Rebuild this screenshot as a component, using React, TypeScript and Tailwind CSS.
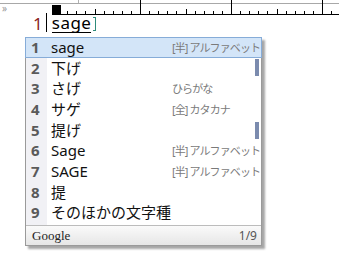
import React from "react";

const rows: { n: number; t: string; a?: string }[] = [
  { n: 1, t: "sage", a: "[半] アルファベット" },
  { n: 2, t: "下げ" },
  { n: 3, t: "さげ", a: "ひらがな" },
  { n: 4, t: "サゲ", a: "[全] カタカナ" },
  { n: 5, t: "提げ" },
  { n: 6, t: "Sage", a: "[半] アルファベット" },
  { n: 7, t: "SAGE", a: "[半] アルファベット" },
  { n: 8, t: "提" },
  { n: 9, t: "そのほかの文字種" },
];

const font = { fontFamily: '"Noto Sans", "Noto Sans CJK JP", sans-serif' };

function Ruler() {
  const ticks: React.ReactElement[] = [];
  for (let i = 1; i < 34; i++) {
    const x = 49 + i * 9.1;
    const major = i % 10 === 0;
    const mid = i % 5 === 0 && !major;
    const y1 = major ? 0 : mid ? 9 : 11;
    ticks.push(
      <line key={i} x1={Math.round(x) + 0.5} x2={Math.round(x) + 0.5} y1={y1} y2={14} stroke="#000" strokeWidth={1} />
    );
  }
  return (
    <svg width="339" height="16" className="block">
      <line x1="0" x2="339" y1="3.5" y2="3.5" stroke="#a8a8a8" />
      <line x1="78.5" x2="78.5" y1="0" y2="3" stroke="#b0b0b0" />
      <line x1="52" x2="339" y1="14.5" y2="14.5" stroke="#000" />
      <rect x="52" y="5" width="9" height="9" fill="#000" />
      {ticks}
    </svg>
  );
}

export default function App() {
  return (
    <div className="relative w-[339px] h-[268px] bg-white overflow-hidden" style={font}>
      <Ruler />
      <div className="absolute left-[2px] top-[3px] text-[10px] leading-none text-[#999]">»</div>
      <div className="flex items-start h-[20px]">
        <span className="ml-[33px] mt-[-1px] text-[17px] leading-[18px] text-[#8b2323]">1</span>
        <span className="ml-[3px] mt-[-3px] w-px h-[19px] bg-black" />
        <span className="ml-[5px] mt-[-2px] text-[17px] tracking-[0.5px] leading-[18px] text-black border-b-[1.5px] border-black">sage</span>
        <span className="ml-[2px] mt-[1px] w-[3px] h-[14px] border-r border-t border-b border-[#2e8b7a]" />
      </div>
      <div className="absolute left-[25px] top-[37px] w-[237px] h-[209px] border border-[#9a9a9a] bg-white shadow-[3px_3px_2px_rgba(0,0,0,0.35)] flex flex-col">
        <div className="relative flex-1 flex flex-col">
          <div className="absolute left-0 top-0 bottom-0 w-[21px] bg-[#f1f1f5]" />
          {rows.map((r) => (
            <div
              key={r.n}
              className={
                "relative flex items-center h-[20.7px] " +
                (r.n === 1 ? "bg-[#d3e5f8] border border-[#86acd8] -mx-px -mt-px" : "")
              }
            >
              <span className="shrink-0 w-[19px] pl-[5px] text-[15px] font-bold text-[#5a5a5a] leading-none">{r.n}</span>
              <span className="shrink-0 ml-[6px] w-[121px] text-[15px] leading-none text-[#111] whitespace-nowrap">{r.t}</span>
              {r.a && (
                <span className="shrink-0 text-[11px] tracking-[-0.9px] leading-none text-[#7a7a7a] whitespace-nowrap">
                  {r.a}
                </span>
              )}
            </div>
          ))}
          <div className="absolute right-[2px] top-[21px] w-[4px] h-[17px] bg-[#7b8bae]" />
          <div className="absolute right-[2px] top-[84px] w-[4px] h-[17px] bg-[#7b8bae]" />
        </div>
        <div className="h-[20px] border-t border-[#bcbcbc] bg-gradient-to-b from-[#fafafa] to-[#e6e6e6] flex items-center justify-between pl-[6px] pr-[4px]">
          <span className="text-[13px] leading-none text-[#222]" style={{ fontFamily: '"Liberation Serif", serif' }}>Google</span>
          <span className="text-[12px] leading-none text-[#555]">1/9</span>
        </div>
      </div>
    </div>
  );
}
